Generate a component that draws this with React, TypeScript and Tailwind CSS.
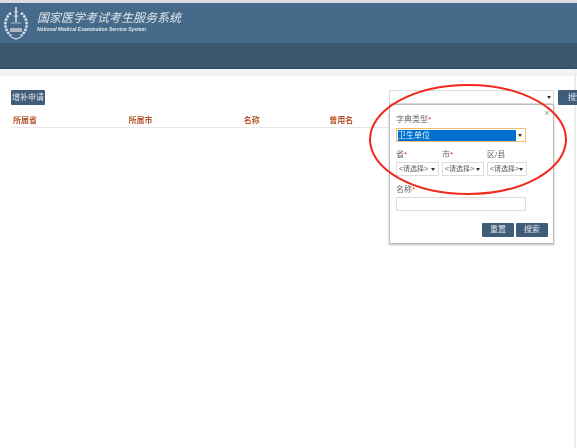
const FONT = { fontFamily: '"Liberation Sans", "Noto Sans CJK SC", sans-serif' };

const COLUMNS = [
  { label: "所属省", width: "w-[116px]" },
  { label: "所属市", width: "w-[116px]" },
  { label: "名称", width: "w-[86px]" },
  { label: "曾用名", width: "w-[60px]" },
];

function Arrow() {
  return <span className="h-0 w-0 shrink-0 border-x-[2.5px] border-t-[3px] border-x-transparent border-t-[#333]" />;
}

function Logo() {
  return (
    <svg width="26" height="34" viewBox="0 0 26 34" fill="none" className="shrink-0">
      <path d="M8 7C1 12 0 23 8 30" stroke="#d5dde4" strokeWidth="2.6" strokeDasharray="2.5 1" />
      <path d="M18 7C25 12 26 23 18 30" stroke="#d5dde4" strokeWidth="2.6" strokeDasharray="2.5 1" />
      <path d="M13 1V16" stroke="#e8edf1" strokeWidth="1.4" />
      <path d="M11 6H15M10.5 10H15.5" stroke="#dfe5ea" strokeWidth="0.8" />
      <path d="M8 17H18" stroke="#c5d0da" strokeWidth="0.8" />
      <path d="M7 22H19V26H7Z" fill="#a9b9c7" />
      <path d="M8 31L13 33L18 31" stroke="#d5dde4" strokeWidth="1.2" />
    </svg>
  );
}

function Label({ text, required }: { text: string; required?: boolean }) {
  return (
    <div className="h-[12px] whitespace-nowrap text-[8px] leading-[12px] text-[#666]">
      {text}
      {required && <span className="text-[#e33]">*</span>}
    </div>
  );
}

function SmallSelect({ label, required, width }: { label: string; required?: boolean; width: string }) {
  return (
    <div className={width}>
      <Label text={label} required={required} />
      <div className="mt-px flex h-[14px] items-center justify-between border border-[#ddd] pl-[2px] pr-[3px] text-[7px] text-[#555]">
        <span className="whitespace-nowrap">&lt;请选择&gt;</span>
        <Arrow />
      </div>
    </div>
  );
}

function DarkButton({ text, className }: { text: string; className: string }) {
  return (
    <div className={`flex items-center justify-center whitespace-nowrap rounded-[1px] bg-[#3f5d78] text-[8px] text-[#dfe6ec] ${className}`}>
      {text}
    </div>
  );
}

export default function App() {
  return (
    <div className="relative h-[448px] w-[577px] overflow-hidden bg-white blur-[0.3px]" style={FONT}>
      <div className="h-[3px] bg-[#d8dde1]" />

      <header className="flex h-[40px] items-center bg-[#466a8a] pl-[3px]">
        <Logo />
        <div className="ml-[8px] -mt-[2px]">
          <div className="text-[12px] italic leading-[15px] text-[#dfe6ec]">国家医学考试考生服务系统</div>
          <div className="text-[5px] font-bold italic leading-[7px] text-[#dfe6ec]">National Medical Examination Service System</div>
        </div>
      </header>
      <nav className="h-[26px] border-b border-[#2f4a62] bg-[#3b566e]" />
      <div className="h-[7px] bg-[#f3f3f3]" />

      {/* page edge line */}
      <div className="absolute bottom-0 right-px top-[69px] w-[2px] bg-[#ececec]" />

      <main className="relative flex items-start justify-between pl-[11px] pt-[14px]">
        <div>
          <DarkButton text="增补申请" className="h-[15px] w-[34px]" />
          <div className="mt-[10px] flex h-[13px] w-[378px] items-center border-b border-[#e8e8e8] pl-[2px] text-[8px] font-bold text-[#b5562f]">
            {COLUMNS.map((col) => (
              <div key={col.label} className={col.width}>{col.label}</div>
            ))}
          </div>
        </div>

        <div className="flex gap-[4px]">
          <div className="flex h-[14px] w-[165px] items-center justify-end border border-[#ddd] pr-[2px]">
            <Arrow />
          </div>
          <DarkButton text="搜索" className="h-[15px] w-[30px] justify-start pl-[10px]" />
        </div>
      </main>

      {/* search popover */}
      <div className="absolute left-[389px] top-[104px] h-[140px] w-[165px] border border-[#bbb] bg-white pl-[6px] pt-[9px] shadow-[0_1px_2px_rgba(0,0,0,0.25)]">
        <span className="absolute right-[4px] top-[3px] text-[8px] leading-[10px] text-[#888]">x</span>
        <Label text="字典类型" required />
        <div className="mt-[2px] flex h-[14px] w-[130px] items-center justify-between border border-[#f0c070] bg-white pl-px pr-[3px]">
          <span className="h-[11px] w-[118px] bg-[#0070d0] text-[8px] leading-[11px] text-[#e8f2fb]">卫生单位</span>
          <Arrow />
        </div>
        <div className="mt-[7px] flex gap-[3px]">
          <SmallSelect label="省" required width="w-[43px]" />
          <SmallSelect label="市" required width="w-[42px]" />
          <SmallSelect label="区/县" width="w-[40px]" />
        </div>
        <div className="mt-[8px]">
          <Label text="名称" required />
          <div className="mt-px h-[14px] w-[130px] border border-[#ddd]" />
        </div>
        <div className="mt-[12px] flex w-[152px] justify-end gap-[2px]">
          <DarkButton text="重置" className="h-[14px] w-[32px]" />
          <DarkButton text="搜索" className="h-[14px] w-[32px]" />
        </div>
      </div>

      {/* red annotation ellipse */}
      <svg width="577" height="448" className="pointer-events-none absolute left-0 top-0" fill="none">
        <ellipse cx="468" cy="139.5" rx="98" ry="54.5" stroke="#f02a1c" strokeWidth="2" />
      </svg>
    </div>
  );
}
